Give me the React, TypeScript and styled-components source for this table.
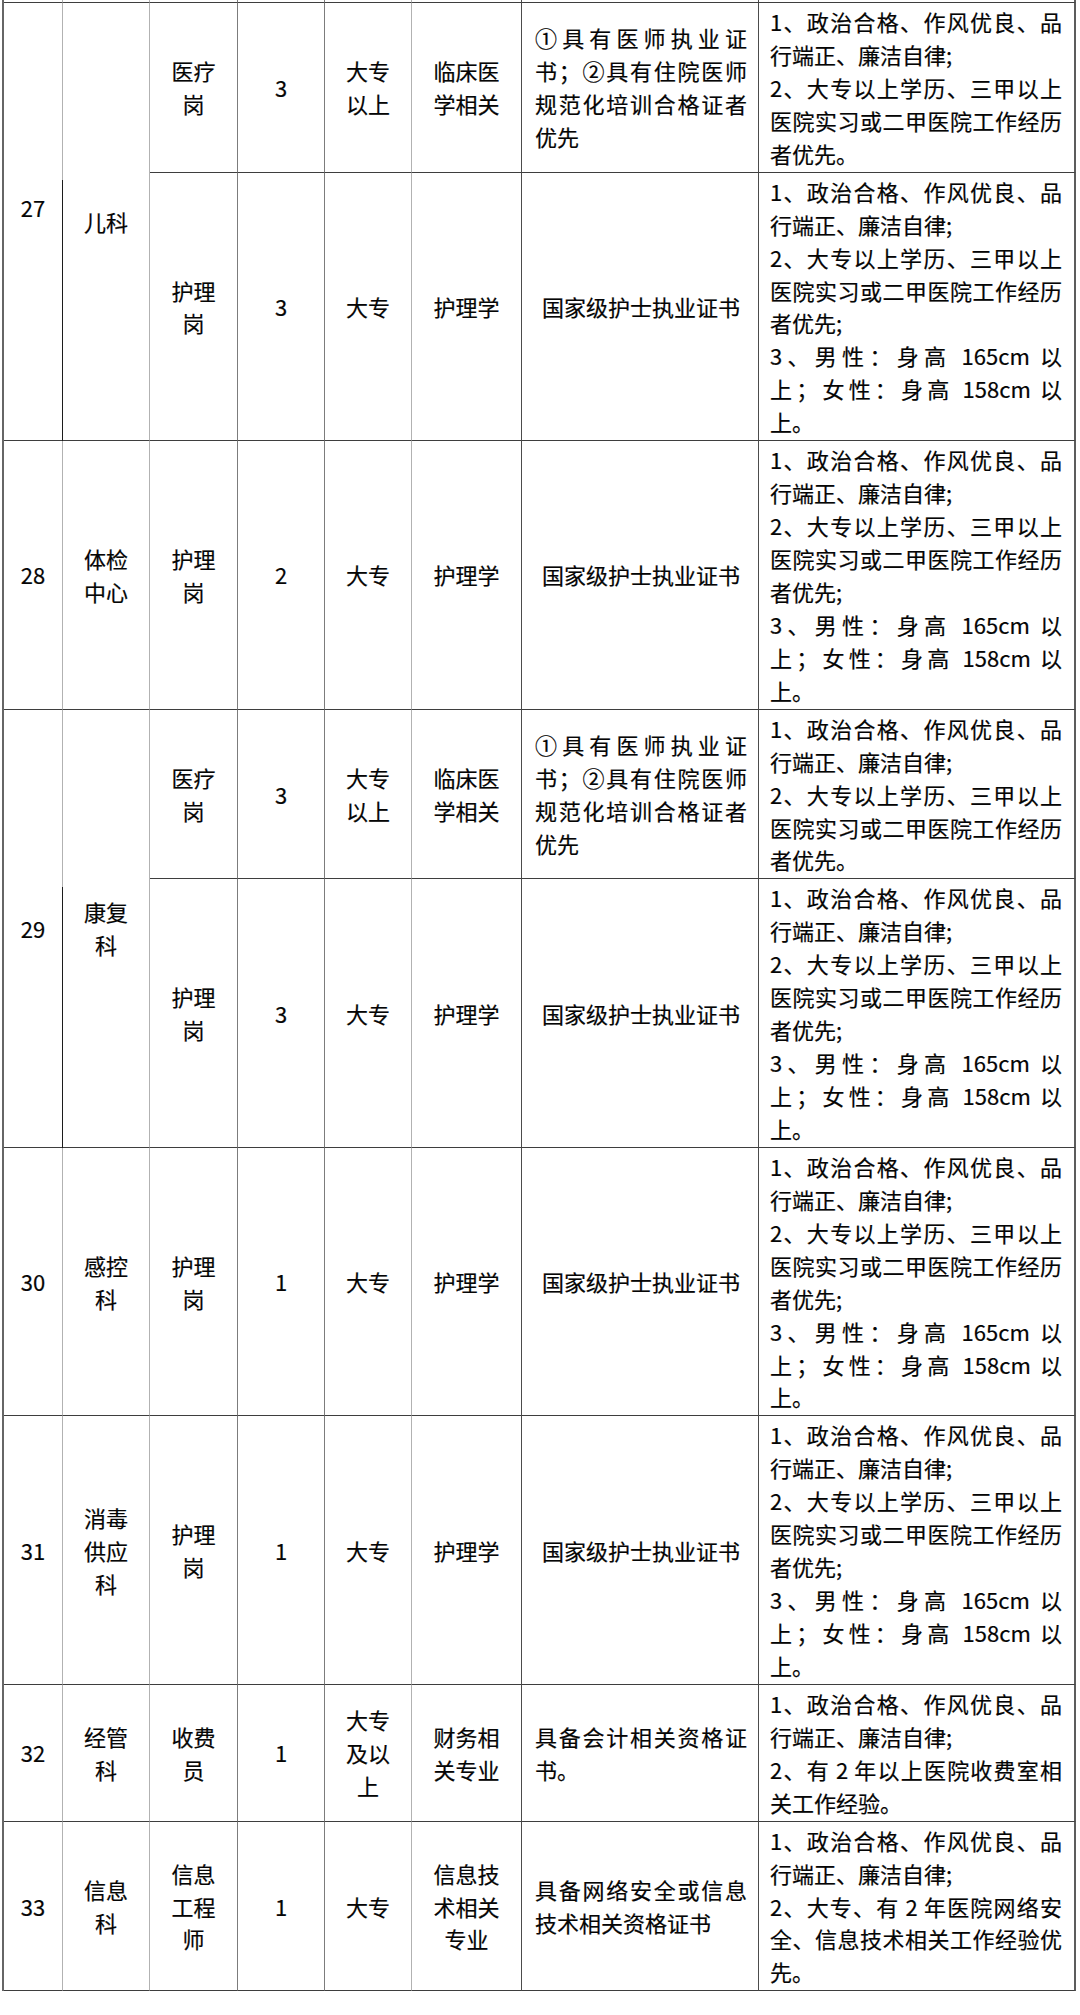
import React from "react";
import styled, { createGlobalStyle, css } from "styled-components";

const GlobalStyle = createGlobalStyle`
  html, body {
    margin: 0;
    padding: 0;
    background: #ffffff;
  }
  body {
    font-family: "Noto Sans CJK SC", "Noto Sans", sans-serif;
    color: #050505;
  }
`;

type Tone = "light" | "mid" | "dark" | "edge";

const TONES: Record<Tone, string> = {
  light: "#b2b2b2",
  mid: "#7c7c7c",
  dark: "#4c4c4c",
  edge: "#5c5c5c",
};

const RULE = "#3e3e3e";

// right-border tone of each column, left to right
const COLUMN_TONES: Tone[] = ["light", "light", "mid", "mid", "light", "dark", "dark", "edge"];

const Page = styled.div`
  width: 1080px;
  min-height: 2015px;
  padding-left: 2px;
  box-sizing: border-box;
  background: #ffffff;
`;

const Grid = styled.div`
  display: grid;
  grid-template-columns: 59px 87px 88px 87px 87px 110px 237px 317px;
  width: 1074px;
  box-sizing: border-box;
  border-left: 2px solid #666666;
  font-size: 22px;
  line-height: 32.93px;
  -webkit-text-stroke: 0.2px #050505;
`;

interface CellProps {
  $tone: Tone;
  $span?: number;
  $lift?: number;
  $seam?: number;
}

const Cell = styled.div<CellProps>`
  position: relative;
  box-sizing: border-box;
  display: flex;
  align-items: center;
  justify-content: center;
  min-width: 0;
  padding: 2px 4px;
  border-bottom: 1px solid ${RULE};
  border-right: ${(p) => (p.$tone === "edge" ? "2px" : "1px")} solid ${(p) => TONES[p.$tone]};
  text-align: center;
  white-space: pre-line;

  ${(p) => p.$span && css`grid-row: span ${p.$span};`}
  ${(p) => p.$lift && css`padding-bottom: ${2 + p.$lift * 2}px;`}
  ${(p) =>
    p.$seam !== undefined &&
    css`
      &::after {
        content: "";
        position: absolute;
        top: ${p.$seam}px;
        bottom: -1px;
        right: -1px;
        width: 1px;
        background: #1c1c1c;
      }
    `}
`;

const StubCell = styled(Cell)`
  height: 3px;
  padding: 0;
`;

const TextCell = styled(Cell)<{ $left: number; $right: number }>`
  justify-content: stretch;
  padding: 2px ${(p) => p.$right}px 2px ${(p) => p.$left}px;
  white-space: normal;
  text-align: left;
`;

const Block = styled.div<{ $center?: boolean }>`
  width: 100%;
  text-align: ${(p) => (p.$center ? "center" : "left")};
`;

const Line = styled.div<{ $fill?: boolean }>`
  ${(p) =>
    p.$fill &&
    css`
      text-align: justify;
      text-align-last: justify;
    `}
`;

type Ln = { text: string; fill?: boolean };
const f = (text: string): Ln => ({ text, fill: true });
const l = (text: string): Ln => ({ text });

const baseReq = [f("1、政治合格、作风优良、品"), l("行端正、廉洁自律;")];

const doctorReq = [
  ...baseReq,
  f("2、大专以上学历、三甲以上"),
  f("医院实习或二甲医院工作经历"),
  l("者优先。"),
];

const nurseReq = [
  ...baseReq,
  f("2、大专以上学历、三甲以上"),
  f("医院实习或二甲医院工作经历"),
  l("者优先;"),
  f("3、男性：身高 165cm 以"),
  f("上；女性：身高 158cm 以"),
  l("上。"),
];

const doctorCert = [
  f("①具有医师执业证"),
  f("书；②具有住院医师"),
  f("规范化培训合格证者"),
  l("优先"),
];

interface Post {
  post: string;
  count: string;
  edu: string;
  major: string;
  cert: Ln[] | string;
  req: Ln[];
}

interface Dept {
  no: string;
  dept: string;
  lift?: number;
  posts: Post[];
}

const doctor: Post = {
  post: "医疗\n岗",
  count: "3",
  edu: "大专\n以上",
  major: "临床医\n学相关",
  cert: doctorCert,
  req: doctorReq,
};

const nurse = (count: string): Post => ({
  post: "护理\n岗",
  count,
  edu: "大专",
  major: "护理学",
  cert: "国家级护士执业证书",
  req: nurseReq,
});

const DEPTS: Dept[] = [
  { no: "27", dept: "儿科", lift: 14, posts: [doctor, nurse("3")] },
  { no: "28", dept: "体检\n中心", posts: [nurse("2")] },
  { no: "29", dept: "康复\n科", posts: [doctor, nurse("3")] },
  { no: "30", dept: "感控\n科", posts: [nurse("1")] },
  { no: "31", dept: "消毒\n供应\n科", posts: [nurse("1")] },
  {
    no: "32",
    dept: "经管\n科",
    posts: [
      {
        post: "收费\n员",
        count: "1",
        edu: "大专\n及以\n上",
        major: "财务相\n关专业",
        cert: [f("具备会计相关资格证"), l("书。")],
        req: [...baseReq, f("2、有 2 年以上医院收费室相"), l("关工作经验。")],
      },
    ],
  },
  {
    no: "33",
    dept: "信息\n科",
    posts: [
      {
        post: "信息\n工程\n师",
        count: "1",
        edu: "大专",
        major: "信息技\n术相关\n专业",
        cert: [f("具备网络安全或信息"), l("技术相关资格证书")],
        req: [
          ...baseReq,
          f("2、大专、有 2 年医院网络安"),
          f("全、信息技术相关工作经验优"),
          l("先。"),
        ],
      },
    ],
  },
];

const Lines = ({ lines }: { lines: Ln[] | string }) =>
  typeof lines === "string" ? (
    <Block $center>{lines}</Block>
  ) : (
    <Block>
      {lines.map((ln, i) => (
        <Line key={i} $fill={ln.fill}>
          {ln.text}
        </Line>
      ))}
    </Block>
  );

const PostCells = ({ p }: { p: Post }) => (
  <>
    <Cell $tone={COLUMN_TONES[2]}>{p.post}</Cell>
    <Cell $tone={COLUMN_TONES[3]}>{p.count}</Cell>
    <Cell $tone={COLUMN_TONES[4]}>{p.edu}</Cell>
    <Cell $tone={COLUMN_TONES[5]}>{p.major}</Cell>
    <TextCell $tone={COLUMN_TONES[6]} $left={13} $right={11}>
      <Lines lines={p.cert} />
    </TextCell>
    <TextCell $tone={COLUMN_TONES[7]} $left={11} $right={12}>
      <Lines lines={p.req} />
    </TextCell>
  </>
);

export default function App() {
  return (
    <>
      <GlobalStyle />
      <Page>
        <Grid>
          {COLUMN_TONES.map((t, i) => (
            <StubCell key={`stub-${i}`} $tone={t} />
          ))}
          {DEPTS.map((d) => {
            const span = d.posts.length > 1 ? d.posts.length : undefined;
            return (
              <React.Fragment key={d.no}>
                <Cell
                  $tone={COLUMN_TONES[0]}
                  $span={span}
                  $lift={d.lift}
                  $seam={span ? 177 : undefined}
                >
                  {d.no}
                </Cell>
                <Cell $tone={COLUMN_TONES[1]} $span={span}>
                  {d.dept}
                </Cell>
                {d.posts.map((p, i) => (
                  <PostCells key={i} p={p} />
                ))}
              </React.Fragment>
            );
          })}
        </Grid>
      </Page>
    </>
  );
}
